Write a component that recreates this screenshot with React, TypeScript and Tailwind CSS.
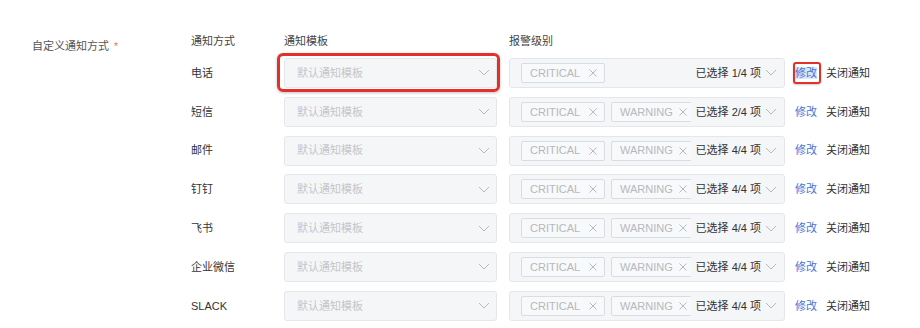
import React from 'react';

const rows = [
  { name: '电话', tags: ['CRITICAL'], count: '1/4', mark: true },
  { name: '短信', tags: ['CRITICAL', 'WARNING'], count: '2/4' },
  { name: '邮件', tags: ['CRITICAL', 'WARNING'], count: '4/4' },
  { name: '钉钉', tags: ['CRITICAL', 'WARNING'], count: '4/4' },
  { name: '飞书', tags: ['CRITICAL', 'WARNING'], count: '4/4' },
  { name: '企业微信', tags: ['CRITICAL', 'WARNING'], count: '4/4' },
  { name: 'SLACK', tags: ['CRITICAL', 'WARNING'], count: '4/4' }
];

const Chevron = () => (
  <svg width="12" height="7" viewBox="0 0 12 7" fill="none" className="shrink-0">
    <path d="M1 1l5 5 5-5" stroke="#b4b8bf" strokeWidth="1" />
  </svg>
);

const Close = () => (
  <svg width="8" height="8" viewBox="0 0 8 8" fill="none" className="shrink-0">
    <path d="M0.5 0.5l7 7M7.5 0.5l-7 7" stroke="#b7babf" strokeWidth="1" />
  </svg>
);

const App = () => {
  return (
    <div
      className="w-[920px] h-[328px] bg-white flex pl-[32px] text-[11px] text-[#333]"
      style={{ fontFamily: '"Liberation Sans", "Noto Sans CJK SC", sans-serif' }}
    >
      {/* Form label */}
      <div className="w-[159px] pt-[38px] shrink-0">
        <div className="flex items-center h-[16px] text-[#555]">
          自定义通知方式
          <span className="ml-[5px] text-[#ef6a5a] text-[10px]">*</span>
        </div>
      </div>

      <div className="flex flex-col pt-[33px] gap-[8.8px]">
        {/* Header */}
        <div className="grid grid-cols-[93px_213px_12px_276px] h-[16px] items-center text-[#444] mb-[0.2px]">
          <span>通知方式</span>
          <span>通知模板</span>
          <span />
          <span>报警级别</span>
        </div>

        {rows.map((row) => (
          <div key={row.name} className="grid grid-cols-[93px_213px_12px_276px_auto] h-[30px] items-center">
            <span>{row.name}</span>

            {/* Template select */}
            <div className="relative h-full">
              <div className="h-full flex items-center justify-between pl-[12px] pr-[6px] bg-[#f5f6f7] border border-[#e4e6e9] rounded-[3px]">
                <span className="text-[#c3c6cb]">默认通知模板</span>
                <Chevron />
              </div>
              {row.mark && (
                <div className="absolute -left-[7px] -right-[3px] -top-[5px] -bottom-[4px] border-[3px] border-[#e2302a] rounded-[6px] shadow-[0_1px_3px_rgba(0,0,0,0.25)]" />
              )}
            </div>

            <span />

            {/* Level multi-select */}
            <div className="h-full flex items-center pl-[11px] pr-[7px] bg-[#f5f6f7] border border-[#e4e6e9] rounded-[3px]">
              <div className="flex-1 flex gap-[6px] overflow-hidden">
                {row.tags.map((t) => (
                  <div
                    key={t}
                    className="shrink-0 w-[84px] h-[20px] flex items-center justify-between pl-[8px] pr-[7px] bg-[#f8f9fa] border border-[#d9dce0] rounded-[2px] text-[#b5b8bd]"
                  >
                    <span>{t}</span>
                    <Close />
                  </div>
                ))}
              </div>
              <span className="ml-[5px] mr-[4px] whitespace-nowrap text-[#333]">已选择 {row.count} 项</span>
              <Chevron />
            </div>

            {/* Actions */}
            <div className="flex items-center pl-[10px]">
              <span className="relative text-[#3f74d6]">
                <span className={row.mark ? 'bg-[#dbe6f8]' : ''}>修改</span>
                {row.mark && (
                  <span className="absolute -left-[2px] -right-[4px] -top-[3px] -bottom-[3px] border-[2px] border-[#e2302a] rounded-[3px] shadow-[0_1px_2px_rgba(0,0,0,0.2)]" />
                )}
              </span>
              <span className="ml-[9px] text-[#333]">关闭通知</span>
            </div>
          </div>
        ))}
      </div>
    </div>
  );
};

export default App;
